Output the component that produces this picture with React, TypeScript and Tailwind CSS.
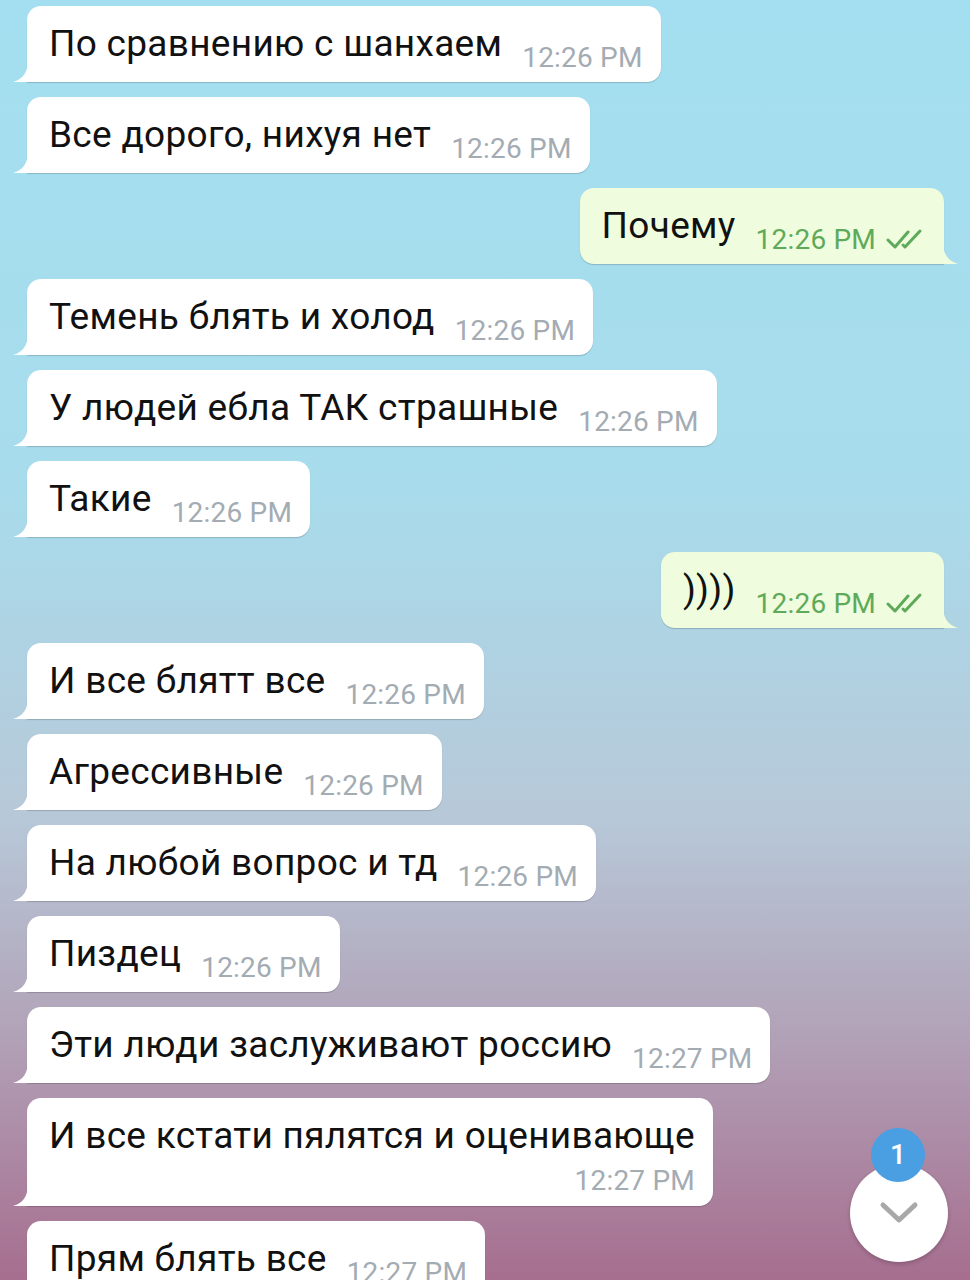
import React from "react";

type Msg = { text: string; time: string; out?: boolean; wrap?: boolean };

const messages: Msg[] = [
  { text: "По сравнению с шанхаем", time: "12:26 PM" },
  { text: "Все дорого, нихуя нет", time: "12:26 PM" },
  { text: "Почему", time: "12:26 PM", out: true },
  { text: "Темень блять и холод", time: "12:26 PM" },
  { text: "У людей ебла ТАК страшные", time: "12:26 PM" },
  { text: "Такие", time: "12:26 PM" },
  { text: "))))", time: "12:26 PM", out: true },
  { text: "И все блятт все", time: "12:26 PM" },
  { text: "Агрессивные", time: "12:26 PM" },
  { text: "На любой вопрос и тд", time: "12:26 PM" },
  { text: "Пиздец", time: "12:26 PM" },
  { text: "Эти люди заслуживают россию", time: "12:27 PM" },
  { text: "И все кстати пялятся и оценивающе", time: "12:27 PM", wrap: true },
  { text: "Прям блять все", time: "12:27 PM" },
];

function Checks() {
  return (
    <svg width="40" height="24" viewBox="0 0 40 24" className="ml-[10px] mb-[4px]">
      <path d="M2 13 L9 20 L22 5" fill="none" stroke="#5faa5a" strokeWidth="3" strokeLinecap="round" strokeLinejoin="round" />
      <path d="M17 18 L19 20 L34 4" fill="none" stroke="#5faa5a" strokeWidth="3" strokeLinecap="round" strokeLinejoin="round" />
    </svg>
  );
}

function Bubble({ m }: { m: Msg }) {
  const bg = m.out ? "bg-[#effdde]" : "bg-white";
  const timeColor = m.out ? "text-[#5faa5a]" : "text-[#a3abb3]";

  return (
    <div className={`flex ${m.out ? "justify-end pr-[26px]" : "pl-[27px]"}`}>
      <div
        className={`relative ${bg} shadow-[0_1px_1px_rgba(0,0,0,0.18)] ${
          m.out ? "rounded-[14px] rounded-br-none" : "rounded-[14px] rounded-bl-none"
        }`}
      >
        {m.out ? (
          <svg width="15" height="22" viewBox="0 0 15 22" className="absolute right-[-14px] bottom-0">
            <path d="M0 0 C0 12 5 19 15 22 L0 22 Z" fill="#effdde" />
          </svg>
        ) : (
          <svg width="15" height="22" viewBox="0 0 15 22" className="absolute left-[-14px] bottom-0">
            <path d="M15 0 C15 12 10 19 0 22 L15 22 Z" fill="#ffffff" />
          </svg>
        )}
        {m.wrap ? (
          <div className="pl-[22px] pr-[18px] pt-[18px] pb-[10px]">
            <div className="text-[37px] leading-[40px] tracking-[0.3px] text-[#111]">{m.text}</div>
            <div className={`mt-[10px] text-right text-[28px] leading-[30px] tracking-[0.2px] ${timeColor}`}>{m.time}</div>
          </div>
        ) : (
          <div className="flex items-end pl-[22px] pr-[18px] pt-[18px] pb-[9px]">
            <span className="mb-[9px] whitespace-nowrap text-[37px] leading-[40px] tracking-[0.3px] text-[#111]">{m.text}</span>
            <span className={`ml-[20px] flex items-end whitespace-nowrap text-[28px] leading-[30px] tracking-[0.2px] ${timeColor}`}>
              {m.time}
              {m.out && <Checks />}
            </span>
          </div>
        )}
      </div>
    </div>
  );
}

export default function App() {
  return (
    <div
      className="relative h-[1280px] w-[970px] overflow-hidden bg-[linear-gradient(180deg,#a3dff0_0%,#a8dcec_38%,#b7c8d8_64%,#b2a4b9_80%,#a66e8f_100%)]"
      style={{ fontFamily: "Roboto, 'Noto Sans', sans-serif" }}
    >
      <div className="flex flex-col gap-[15px] pt-[6px]">
        {messages.map((m, i) => (
          <Bubble key={i} m={m} />
        ))}
      </div>

      <div className="absolute left-[850px] top-[1164px] flex h-[98px] w-[98px] items-center justify-center rounded-full bg-white shadow-[0_2px_4px_rgba(0,0,0,0.2)]">
        <svg width="40" height="24" viewBox="0 0 40 24">
          <path d="M4 4 L20 19 L36 4" fill="none" stroke="#a8a8a8" strokeWidth="5" strokeLinecap="round" strokeLinejoin="round" />
        </svg>
      </div>
      <div className="absolute left-[871px] top-[1128px] flex h-[54px] w-[54px] items-center justify-center rounded-full bg-[#4a9fe3] text-[28px] font-medium text-white">
        1
      </div>
    </div>
  );
}
